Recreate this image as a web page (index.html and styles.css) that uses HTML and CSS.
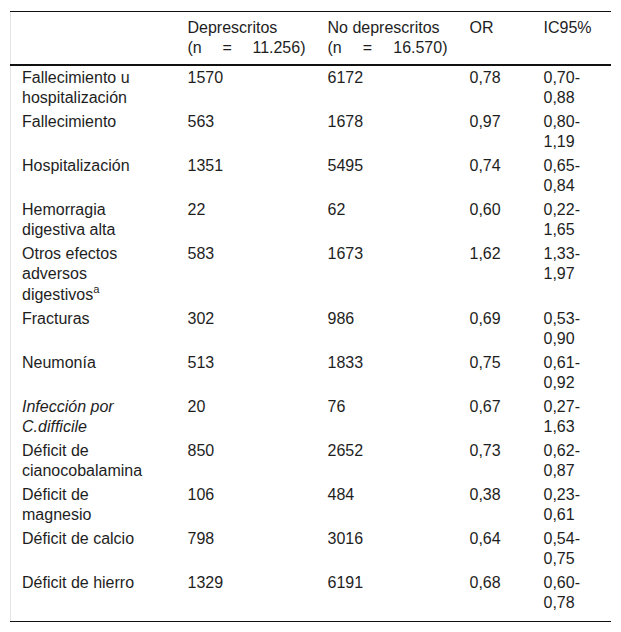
FILE: index.html
```html
<!DOCTYPE html>
<html lang="es">
<head>
    <meta charset="UTF-8">
    <meta name="viewport" content="width=device-width, initial-scale=1.0">
    <title>Deprescripción - resultados</title>
    <link rel="stylesheet" href="styles.css">
</head>
<body>

    <table class="results">
        <colgroup>
            <col class="col-label">
            <col class="col-dep">
            <col class="col-nodep">
            <col class="col-or">
            <col class="col-ic">
        </colgroup>
        <thead>
            <tr>
                <th></th>
                <th>Deprescritos <span class="n">(n = 11.256)</span></th>
                <th>No deprescritos <span class="n">(n = 16.570)</span></th>
                <th>OR</th>
                <th>IC95%</th>
            </tr>
        </thead>
        <tbody>
            <tr><td>Fallecimiento u hospitalización</td><td>1570</td><td>6172</td><td>0,78</td><td>0,70-0,88</td></tr>
            <tr><td>Fallecimiento</td><td>563</td><td>1678</td><td>0,97</td><td>0,80-1,19</td></tr>
            <tr><td>Hospitalización</td><td>1351</td><td>5495</td><td>0,74</td><td>0,65-0,84</td></tr>
            <tr><td>Hemorragia digestiva alta</td><td>22</td><td>62</td><td>0,60</td><td>0,22-1,65</td></tr>
            <tr><td>Otros efectos adversos digestivos<sup>a</sup></td><td>583</td><td>1673</td><td>1,62</td><td>1,33-1,97</td></tr>
            <tr><td>Fracturas</td><td>302</td><td>986</td><td>0,69</td><td>0,53-0,90</td></tr>
            <tr><td>Neumonía</td><td>513</td><td>1833</td><td>0,75</td><td>0,61-0,92</td></tr>
            <tr><td><em>Infección por C.difficile</em></td><td>20</td><td>76</td><td>0,67</td><td>0,27-1,63</td></tr>
            <tr><td>Déficit de cianocobalamina</td><td>850</td><td>2652</td><td>0,73</td><td>0,62-0,87</td></tr>
            <tr><td>Déficit de magnesio</td><td>106</td><td>484</td><td>0,38</td><td>0,23-0,61</td></tr>
            <tr><td>Déficit de calcio</td><td>798</td><td>3016</td><td>0,64</td><td>0,54-0,75</td></tr>
            <tr class="last"><td>Déficit de hierro</td><td>1329</td><td>6191</td><td>0,68</td><td>0,60-0,78</td></tr>
        </tbody>
    </table>

</body>
</html>
```

FILE: styles.css
```css
/* Table colors */
:root {
    --text-color: #1e1e1e;
    --rule-color: #111111;
    --side-color: #e4e4e4;
}

body {
    margin: 11px 10px;
    background-color: #ffffff;
    font-family: "Liberation Sans", Arial, sans-serif;
    font-size: 16px;
    color: var(--text-color);
}

.results {
    width: 601px;
    table-layout: fixed;
    border-collapse: collapse;
    border-top: 1px solid var(--rule-color);
    border-bottom: 1px solid var(--rule-color);
    border-left: 1px solid var(--side-color);
    border-right: 1px solid var(--side-color);
}

.col-label { width: 166px; }
.col-dep { width: 140px; }
.col-nodep { width: 142px; }
.col-or { width: 74px; }
.col-ic { width: 79px; }

th, td {
    text-align: left;
    vertical-align: top;
    padding: 2px 11px;
    line-height: 20px;
}

td:first-child {
    padding-right: 24px;
}

th {
    font-weight: normal;
    padding-top: 6px;
    padding-bottom: 6px;
    border-bottom: 2px solid var(--rule-color);
}

.n {
    display: block;
    text-align: justify;
    text-align-last: justify;
}

sup {
    font-size: 0.7em;
    vertical-align: 7px;
    line-height: 1;
}

.last td {
    padding-bottom: 8px;
}
```
